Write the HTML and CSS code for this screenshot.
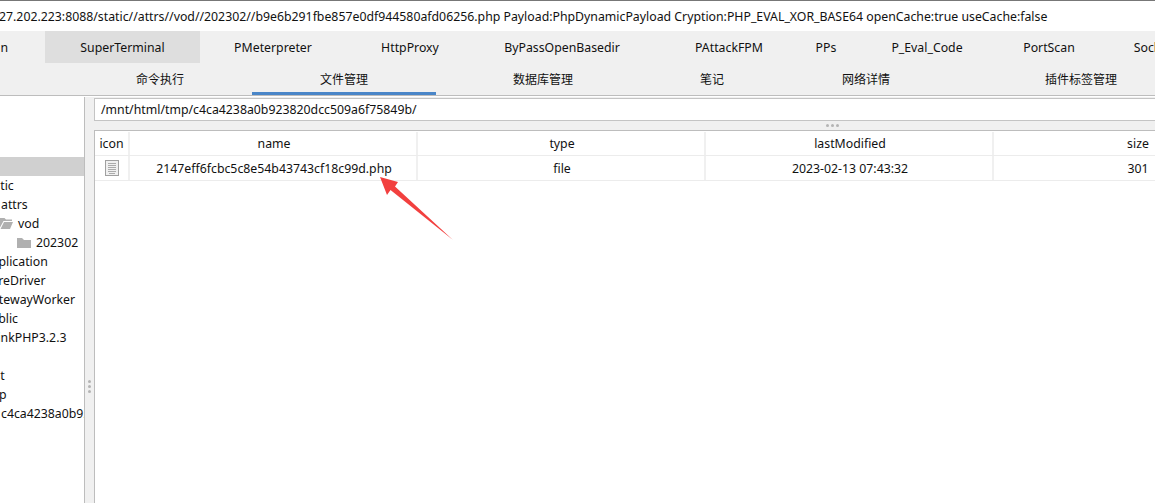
FILE: index.html
```html
<!DOCTYPE html>
<html lang="en">
<head>
<meta charset="utf-8">
<title>Terminal</title>
<link rel="stylesheet" href="styles.css">
</head>
<body>
<div class="app">
  <div class="titlebar"><span class="title">27.202.223:8088/static//attrs//vod//202302//b9e6b291fbe857e0df944580afd06256.php Payload:PhpDynamicPayload Cryption:PHP_EVAL_XOR_BASE64 openCache:true useCache:false</span></div>
  <div class="plugins">
    <div class="plug p0"><span>n</span></div>
    <div class="plug p1 hover">SuperTerminal</div>
    <div class="plug p2">PMeterpreter</div>
    <div class="plug p3">HttpProxy</div>
    <div class="plug p4">ByPassOpenBasedir</div>
    <div class="plug p5">PAttackFPM</div>
    <div class="plug p6">PPs</div>
    <div class="plug p7">P_Eval_Code</div>
    <div class="plug p8">PortScan</div>
    <div class="plug p9">Socks</div>
  </div>
  <div class="tabs">
    <div class="tab t1">命令执行</div>
    <div class="tab t2 active">文件管理</div>
    <div class="tab t3">数据库管理</div>
    <div class="tab t4">笔记</div>
    <div class="tab t5">网络详情</div>
    <div class="tab t6">插件标签管理</div>
  </div>
  <div class="main">
    <aside class="tree">
      <div class="node selected"></div>
      <div class="node l1">static</div>
      <div class="node l2">attrs</div>
      <div class="node l3"><svg class="folder open" viewBox="0 0 13 11"><path d="M0 0h4.500l1.500 1.500h6v1.500H3.500L0 9.500z M4 4H13l-3 7H0.500z"/></svg>vod</div>
      <div class="node l4"><svg class="folder" viewBox="0 0 14 10"><path d="M0 0h5l2 2h7v8H0z"/></svg>202302</div>
      <div class="node l1">Application</div>
      <div class="node l1">CoreDriver</div>
      <div class="node l1">GatewayWorker</div>
      <div class="node l1">public</div>
      <div class="node l1">ThinkPHP3.2.3</div>
      <div class="node"></div>
      <div class="node l1">test</div>
      <div class="node l1">tmp</div>
      <div class="node l2">c4ca4238a0b923820dcc509a6f75849b</div>
    </aside>
    <div class="grip"><i></i><i></i><i></i></div>
    <section class="files">
      <div class="path">/mnt/html/tmp/c4ca4238a0b923820dcc509a6f75849b/</div>
      <div class="hgrip"><i></i><i></i><i></i></div>
      <div class="table">
        <div class="row head">
          <div class="cell">icon</div>
          <div class="cell">name</div>
          <div class="cell">type</div>
          <div class="cell">lastModified</div>
          <div class="cell">size</div>
        </div>
        <div class="row">
          <div class="cell"><svg class="fileicon" viewBox="0 0 14 16"><rect x="0.500" y="0.500" width="13" height="15" fill="#f0f0f0" stroke="#a0a0a0"/><path d="M3 3.500h8M3 5.500h8M3 7.500h8M3 9.500h8M3 11.500h8M4 13.500h6" stroke="#ababab" fill="none"/></svg></div>
          <div class="cell">2147eff6fcbc5c8e54b43743cf18c99d.php</div>
          <div class="cell">file</div>
          <div class="cell">2023-02-13 07:43:32</div>
          <div class="cell">301</div>
        </div>
      </div>
    </section>
  </div>
  <svg class="arrow" viewBox="0 0 1155 503"><path d="M380 177L398 182L395 186.500L453 240L390.500 190L387 195Z"/></svg>
</div>
</body>
</html>
```
FILE: styles.css
```css
* { box-sizing: border-box; }
html, body { margin: 0; height: 100%; }
body { background: #fff; color: #111; font: 12.3px/19px "Noto Sans", "Noto Sans CJK SC", sans-serif; overflow: hidden; }
.app { position: relative; width: 1155px; height: 503px; overflow: hidden; display: flex; flex-direction: column; }
.titlebar { height: 31px; flex: none; border-top: 1px solid #777; background: #fff; display: flex; align-items: center; overflow: hidden; white-space: nowrap; }
.title { margin-left: -1px; }
.plugins { height: 32px; flex: none; display: flex; background: #f0f0f0; overflow: hidden; }
.plug { flex: none; display: flex; align-items: center; justify-content: center; height: 32px; white-space: nowrap; }
.plug.hover { background: #dedede; }
.p0 { width: 45px; justify-content: flex-end; padding-right: 37px; }
.p1 { width: 155px; }
.p2 { width: 146px; }
.p3 { width: 128px; }
.p4 { width: 176px; }
.p5 { width: 158px; }
.p6 { width: 36px; }
.p7 { width: 166px; }
.p8 { width: 78px; }
.p9 { width: 124px; }
.tabs { height: 33px; flex: none; display: flex; background: #f0f0f0; padding-left: 68px; border-bottom: 1px solid #bdbdbd; overflow: hidden; font-size: 12px; }
.tab { flex: none; display: flex; align-items: center; justify-content: center; height: 32px; padding-top: 1px; white-space: nowrap; }
.tab.active { border-bottom: 3px solid #4a86c8; padding-top: 3px; }
.t1, .t2 { width: 184px; }
.t3 { width: 214px; }
.t4 { width: 124px; }
.t5 { width: 184px; }
.t6 { width: 246px; }
.main { flex: 1; display: flex; min-height: 0; border-top: 1px solid #fff; }
.tree { width: 85px; flex: none; background: #fff; border-right: 1px solid #bdbdbd; padding-top: 60px; overflow: hidden; }
.node { height: 19px; white-space: nowrap; overflow: hidden; display: flex; align-items: center; }
.node.selected { background: #d0d0d0; }
.l1 { margin-left: -17px; }
.l2 { padding-left: 1px; }
.l3 { padding-left: 0; }
.l3 .folder { margin-right: 5px; }
.l4 { padding-left: 17px; }
.l4 .folder { margin-right: 5px; }
.folder { width: 13px; height: 11px; fill: #b0b0b0; flex: none; }
.l4 .folder { width: 14px; height: 10px; }
.grip { width: 9px; flex: none; background: #f0f0f0; display: flex; flex-direction: column; justify-content: center; align-items: center; gap: 2px; padding-top: 172px; }
.grip i, .hgrip i { width: 3px; height: 3px; border-radius: 50%; background: #b4b4b4; display: block; }
.files { flex: 1; min-width: 0; display: flex; flex-direction: column; background: #f0f0f0; }
.path { height: 23px; margin-top: 1px; flex: none; background: #fff; border: 1px solid #c4c4c4; border-right: 0; padding-left: 6px; line-height: 21px; white-space: nowrap; }
.hgrip { height: 9px; flex: none; display: flex; justify-content: center; align-items: center; gap: 2px; padding-left: 416px; }
.table { flex: 1; background: #fff; border-top: 1px solid #bdbdbd; border-left: 1px solid #bdbdbd; overflow: hidden; }
.row { display: grid; grid-template-columns: 35px 288px 288px 288px 288px; height: 25px; border-bottom: 1px solid #ececec; width: 1187px; }
.row.head { height: 25px; padding-top: 1px; }
.cell { display: flex; align-items: center; justify-content: center; border-right: 2px solid #f0f0f0; padding-left: 2px; white-space: nowrap; }
.row .cell:first-child { padding-left: 0; }
.fileicon { width: 14px; height: 16px; }
.arrow { position: absolute; left: 0; top: 0; width: 1155px; height: 503px; fill: #f2403f; pointer-events: none; }
```
